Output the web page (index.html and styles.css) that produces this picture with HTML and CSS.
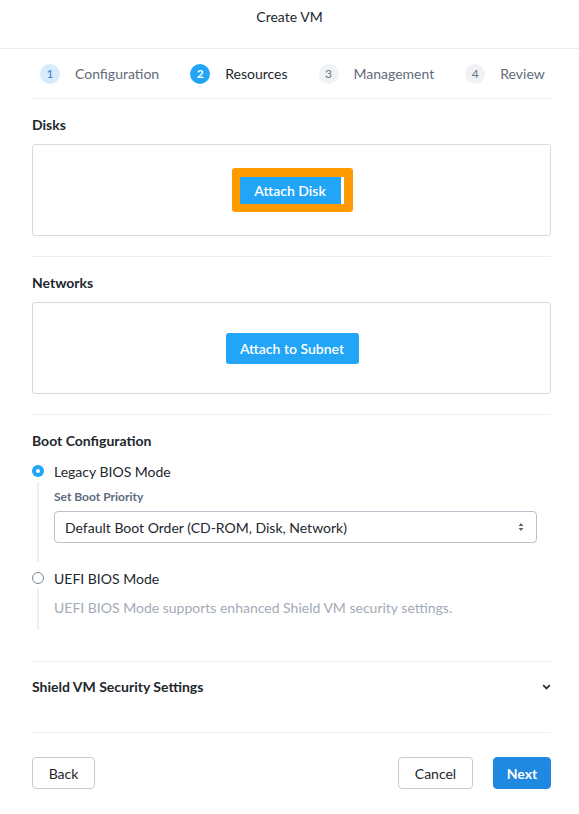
FILE: index.html
```html
<!DOCTYPE html>
<html>
<head>
<meta charset="utf-8">
<link rel="stylesheet" href="styles.css">
</head>
<body>
<div class="modal">
  <header class="modal-header">Create VM</header>
  <div class="modal-body">
    <nav class="stepper">
      <div class="step done"><span class="step-num">1</span><span class="step-label">Configuration</span></div>
      <div class="step active"><span class="step-num">2</span><span class="step-label">Resources</span></div>
      <div class="step"><span class="step-num">3</span><span class="step-label">Management</span></div>
      <div class="step"><span class="step-num">4</span><span class="step-label">Review</span></div>
    </nav>

    <section class="section">
      <h3 class="section-title">Disks</h3>
      <div class="panel">
        <div class="highlight"><button class="btn-primary btn-highlighted">Attach Disk</button></div>
      </div>
    </section>

    <section class="section">
      <h3 class="section-title">Networks</h3>
      <div class="panel">
        <button class="btn-primary btn-subnet">Attach to Subnet</button>
      </div>
    </section>

    <section class="section section-boot">
      <h3 class="section-title">Boot Configuration</h3>
      <label class="radio-row"><span class="radio checked"></span><span class="radio-label">Legacy BIOS Mode</span></label>
      <div class="radio-sub sub-legacy">
        <div class="field-label">Set Boot Priority</div>
        <div class="select">
          <span>Default Boot Order (CD-ROM, Disk, Network)</span>
          <svg class="select-arrows" width="8" height="10" viewBox="0 0 8 10"><path d="M4 1 L6.5 4 H1.5 Z M4 9 L6.5 6 H1.5 Z" fill="#5b6778"/></svg>
        </div>
      </div>
      <label class="radio-row"><span class="radio"></span><span class="radio-label">UEFI BIOS Mode</span></label>
      <div class="radio-sub sub-uefi">
        <div class="help-text">UEFI BIOS Mode supports enhanced Shield VM security settings.</div>
      </div>
    </section>

    <section class="section section-shield">
      <h3 class="section-title">Shield VM Security Settings</h3>
      <svg class="chevron" width="9" height="6" viewBox="0 0 9 6"><path d="M1.2 1.2 L4.5 4.4 L7.8 1.2" fill="none" stroke="#2b333d" stroke-width="1.8"/></svg>
    </section>

    <footer class="footer">
      <button class="btn btn-back">Back</button>
      <div class="footer-right">
        <button class="btn btn-cancel">Cancel</button>
        <button class="btn btn-next">Next</button>
      </div>
    </footer>
  </div>
</div>
</body>
</html>
```

FILE: styles.css
```css
* { box-sizing: border-box; }
html, body { margin: 0; padding: 0; background: #fff; }
body {
  font-family: "Lato", "Open Sans", sans-serif;
  font-size: 14px;
  color: #22272e;
  -webkit-font-smoothing: antialiased;
}
button { font-family: inherit; cursor: pointer; }

.modal-header {
  height: 49px;
  padding-top: 8px;
  line-height: 18px;
  text-align: center;
  font-size: 14px;
  font-weight: 400;
  color: #22272e;
  border-bottom: 1px solid #eceef1;
}

.modal-body { padding: 0 28px 0 32px; }

.stepper {
  display: flex;
  align-items: center;
  gap: 31px;
  height: 50px;
  padding-left: 8px;
  border-bottom: 1px solid #eceef1;
}
.step { display: flex; align-items: center; gap: 15px; color: #5f6b7a; }
.step-num {
  width: 20px; height: 20px; border-radius: 50%;
  display: flex; align-items: center; justify-content: center;
  font-size: 12px; background: #f0f2f5; color: #6b7785;
}
.step.done .step-num { background: #d7ebfb; color: #2a7fd0; }
.step.active .step-num { background: #22a5f7; color: #fff; font-weight: 700; }
.step.active .step-label { color: #22272e; }
.step-label { font-size: 14px; }

.section {
  padding: 18px 0 20px;
  border-bottom: 1px solid #eceef1;
}
.section-title {
  margin: 0 0 11px;
  font-size: 14px;
  line-height: 16px;
  font-weight: 700;
  color: #22272e;
}
.panel {
  height: 92px;
  border: 1px solid #d5dbe3;
  border-radius: 3px;
  display: flex;
  align-items: center;
  justify-content: center;
}
.btn-primary {
  border: 0;
  background: #22a5f7;
  color: #fff;
  font-size: 14px;
  font-weight: 600;
  border-radius: 3px;
  padding: 0;
}
.highlight {
  display: flex;
  padding: 9px 9px 8px 8px;
  background: #ff9a00;
  border-radius: 3px;
  margin-left: 1px;
}
.btn-highlighted {
  width: 104px; height: 27px;
  border-radius: 0;
  border-right: 3px solid #fff;
}
.btn-subnet { width: 133px; height: 31px; margin-left: 1px; }

.section-boot { padding-bottom: 31px; }
.section-boot .section-title { margin-bottom: 14px; }
.radio-row { display: flex; align-items: center; gap: 10px; height: 16px; }
.radio {
  width: 12px; height: 12px; border-radius: 50%;
  border: 1.5px solid #7d8896;
  flex: none;
}
.radio.checked {
  border: 0;
  background: #22a5f7;
  display: flex; align-items: center; justify-content: center;
}
.radio.checked::after {
  content: ""; width: 4px; height: 4px; border-radius: 50%; background: #fff;
}
.radio-label { font-size: 14px; color: #22272e; }
.radio-sub {
  margin-left: 5px;
  border-left: 2px solid #eceef1;
  padding-left: 15px;
}
.sub-legacy { margin-top: 3px; padding-top: 8px; padding-bottom: 19px; margin-bottom: 8px; }
.sub-uefi { margin-top: 3px; padding-top: 10px; padding-bottom: 13px; }
.field-label {
  font-size: 12px; line-height: 14px; font-weight: 700; color: #5d6b7d;
  margin-bottom: 7px;
}
.select {
  width: 483px; height: 32px;
  border: 1px solid #b9c1cc;
  border-radius: 4px;
  display: flex; align-items: center; justify-content: space-between;
  padding: 0 11px 0 10px;
  font-size: 14px; color: #22272e;
}
.help-text { font-size: 14px; line-height: 18px; color: #a3abb6; }

.section-shield {
  display: flex; align-items: center; justify-content: space-between;
  padding: 17px 0 37px;
}
.section-shield .section-title { margin: 0; }

.footer {
  display: flex; justify-content: space-between; align-items: center;
  padding-top: 24px;
}
.footer-right { display: flex; gap: 20px; }
.btn {
  height: 32px; border-radius: 4px; font-size: 14px; padding: 0;
  background: #fff; border: 1px solid #c4cad3; color: #22272e;
}
.btn-back { width: 63px; }
.btn-cancel { width: 75px; }
.btn-next { width: 58px; background: #1f88e0; border-color: #1f88e0; color: #fff; font-weight: 700; }
```
